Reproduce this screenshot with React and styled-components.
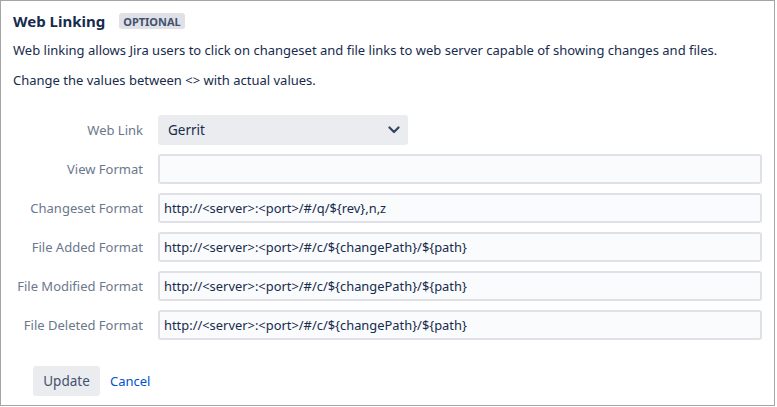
import styled, { createGlobalStyle } from "styled-components";

const GlobalStyle = createGlobalStyle`
  html, body { margin: 0; padding: 0; background: #fff; }
  body {
    font-family: "Noto Sans", "Liberation Sans", sans-serif;
    font-size: 13px;
    color: #172b4d;
  }
`;

const Panel = styled.div`
  box-sizing: border-box;
  width: 775px;
  height: 406px;
  border: 1px solid #a5a5a5;
  padding: 8px 12px 0 12px;
`;

const Header = styled.div`
  display: flex;
  align-items: center;
  gap: 14px;
  height: 24px;
`;

const Title = styled.h2`
  margin: 0;
  font-size: 15px;
  font-weight: 700;
  color: #172b4d;
`;

const Badge = styled.span`
  display: inline-flex;
  align-items: center;
  height: 16px;
  padding: 0 4px;
  border-radius: 3px;
  background: #dfe1e6;
  color: #42526e;
  font-size: 11px;
  font-weight: 700;
  text-transform: uppercase;
`;

const Text = styled.p`
  margin: ${(p) => (p.$first ? "7px" : "10px")} 0 0;
  line-height: 20px;
  white-space: nowrap;
`;

const Form = styled.form`
  display: flex;
  flex-direction: column;
  gap: 9px;
  margin-top: 25px;
`;

const Row = styled.div`
  display: flex;
  align-items: center;
  gap: 15px;
`;

const Label = styled.label`
  width: 130px;
  flex-shrink: 0;
  text-align: right;
  white-space: nowrap;
  color: #6b778c;
  font-size: 13px;
`;

const SelectBox = styled.div`
  box-sizing: border-box;
  width: 250px;
  height: 30px;
  border-radius: 3px;
  background: #ebecf0;
  display: flex;
  align-items: center;
  justify-content: space-between;
  padding: 0 8px 0 10px;
  color: #172b4d;
  font-size: 13.5px;
`;

const Input = styled.input`
  box-sizing: border-box;
  width: 605px;
  height: 30px;
  border: 2px solid #dfe1e6;
  border-radius: 3px;
  background: #fafbfc;
  padding: 0 4px;
  font: inherit;
  font-size: 12.9px;
  color: #172b4d;
  outline: none;
`;

const Actions = styled.div`
  display: flex;
  align-items: center;
  gap: 10px;
  margin-top: 26px;
  padding-left: 20px;
`;

const Button = styled.button`
  height: 30px;
  width: 67px;
  padding: 0;
  border: none;
  border-radius: 3px;
  background: #ebecf0;
  color: #42526e;
  font: inherit;
  font-size: 13.5px;
`;

const LinkButton = styled.a`
  color: #0052cc;
  text-decoration: none;
`;

const Chevron = () => (
  <svg width="12" height="8" viewBox="0 0 12 8">
    <path d="M1.5 1.5 L6 6 L10.5 1.5" fill="none" stroke="#344563" strokeWidth="2.2" strokeLinecap="round" strokeLinejoin="round" />
  </svg>
);

const fields = [
  ["View Format", ""],
  ["Changeset Format", "http://<server>:<port>/#/q/${rev},n,z"],
  ["File Added Format", "http://<server>:<port>/#/c/${changePath}/${path}"],
  ["File Modified Format", "http://<server>:<port>/#/c/${changePath}/${path}"],
  ["File Deleted Format", "http://<server>:<port>/#/c/${changePath}/${path}"],
];

export default function App() {
  return (
    <>
      <GlobalStyle />
      <Panel>
        <Header>
          <Title>Web Linking</Title>
          <Badge>Optional</Badge>
        </Header>
        <Text $first>
          Web linking allows Jira users to click on changeset and file links to web server capable of showing changes and files.
        </Text>
        <Text>Change the values between &lt;&gt; with actual values.</Text>
        <Form onSubmit={(e) => e.preventDefault()}>
          <Row>
            <Label>Web Link</Label>
            <SelectBox>
              <span>Gerrit</span>
              <Chevron />
            </SelectBox>
          </Row>
          {fields.map(([label, value]) => (
            <Row key={label}>
              <Label>{label}</Label>
              <Input defaultValue={value} />
            </Row>
          ))}
        </Form>
        <Actions>
          <Button>Update</Button>
          <LinkButton href="#">Cancel</LinkButton>
        </Actions>
      </Panel>
    </>
  );
}
